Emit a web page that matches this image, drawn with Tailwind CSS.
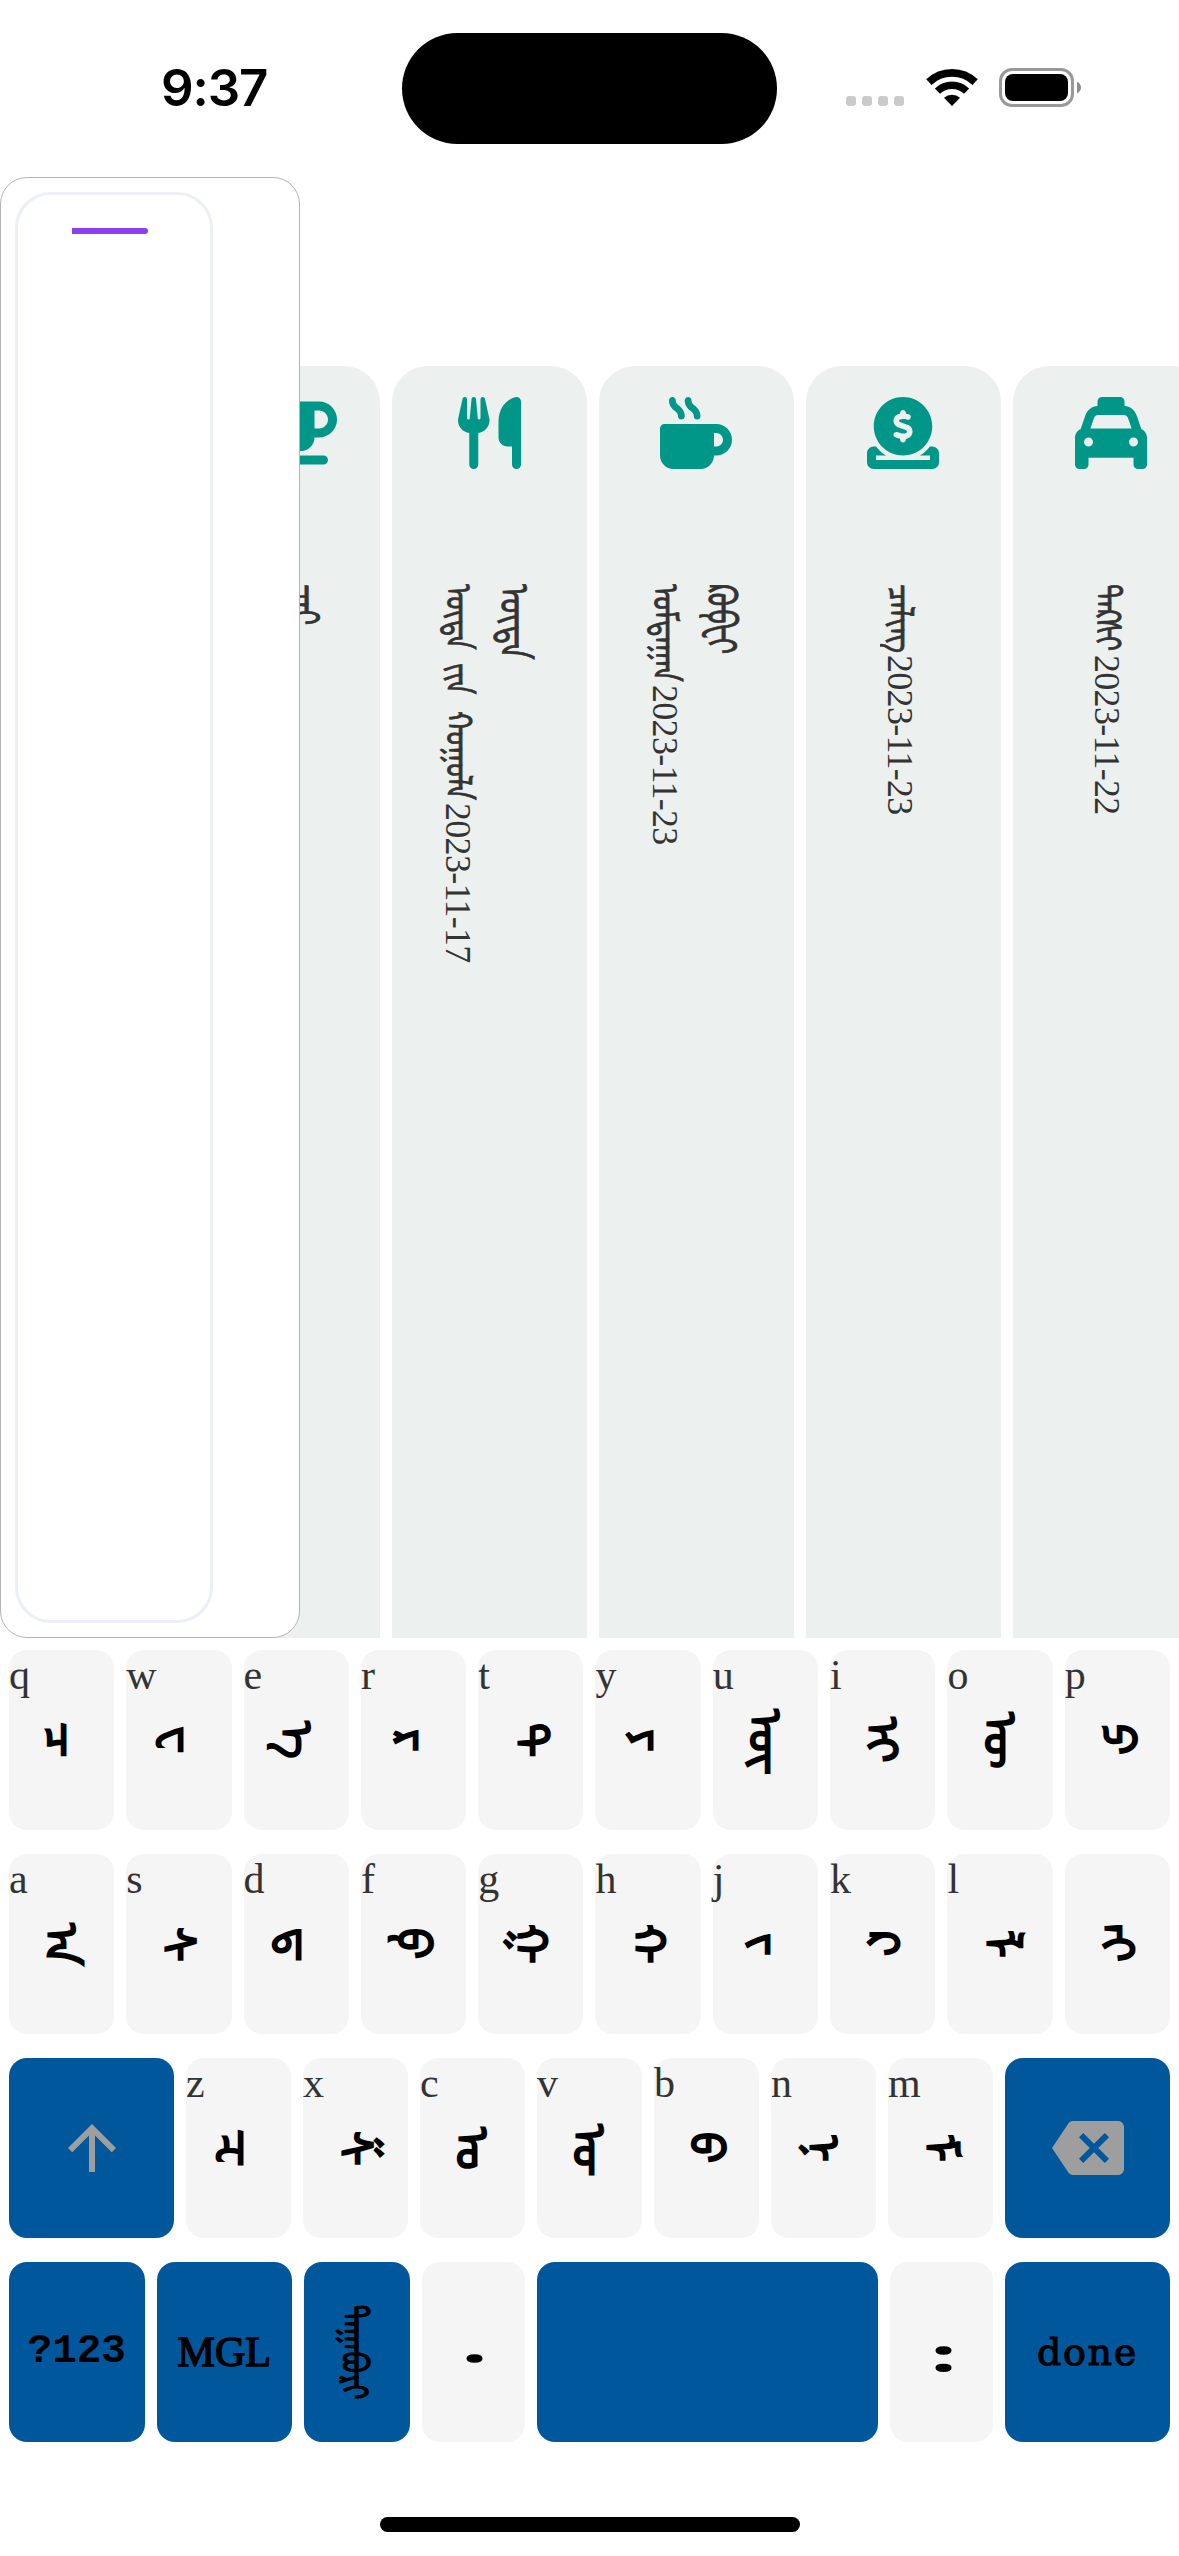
<!DOCTYPE html>
<html lang="mn">
<head>
<meta charset="utf-8">
<title>Keyboard</title>
<script src="https://cdn.jsdelivr.net/npm/@tailwindcss/browser@4"></script>
</head>
<body class="relative flex h-[2556px] w-[1179px] flex-col overflow-hidden bg-white font-['Liberation_Serif','Noto_Sans_Mongolian',serif]">

<!-- Status bar -->
<header class="flex h-[177px] shrink-0 items-start">
  <div class="w-[402px] pt-[57px] pl-[161px] font-['Inter',sans-serif] text-[51px] leading-[62px] font-semibold tracking-[-1.1px]">9:37</div>
  <div class="mt-[33px] h-[111px] w-[375px] rounded-full bg-black"></div>
  <div class="flex pt-[68px] pl-[69px]">
    <div class="flex gap-[6px] pt-[28px]">
      <i class="size-[10px] rounded-[3px] bg-[#cbcbcb]"></i><i class="size-[10px] rounded-[3px] bg-[#cbcbcb]"></i><i class="size-[10px] rounded-[3px] bg-[#cbcbcb]"></i><i class="size-[10px] rounded-[3px] bg-[#cbcbcb]"></i>
    </div>
    <svg class="ml-[21px] h-[40px] w-[54px]" viewBox="-27 -38.5 54 40" fill="none" stroke="#000">
      <path stroke-width="7.7" d="M-23.1-24.4A33.6 33.6 0 0 1 23.1-24.4"/>
      <path stroke-width="7.3" d="M-14.6-15.4A21.2 21.2 0 0 1 14.6-15.4"/>
      <path fill="#000" stroke="none" d="M0-.5L-8-8.7A12 12 0 0 1 8-8.7Z"/>
    </svg>
    <div class="ml-[20px] h-[39px] w-[75px] rounded-[13px] border-3 border-[#999] p-[3px]"><div class="h-[27px] rounded-[8px] bg-black"></div></div>
    <svg class="mt-[13px] ml-[3px] h-[13px] w-[4px]" viewBox="0 0 4 13"><path fill="#8c8c8c" d="M0 .5Q4 3 4 6.5T0 12.5Z"/></svg>
  </div>
</header>

<!-- Expense cards -->
<main class="flex h-[1461px] shrink-0 gap-[12px] overflow-hidden pt-[189px] pl-[185px]">
  <section class="flex w-[195px] shrink-0 flex-col items-center rounded-t-[36px] bg-[#ecf0ef] pt-[31px]">
    <div class="h-[72px] w-[72px]"><svg class="h-[72px] w-[90px] max-w-none fill-[#009688]" viewBox="0 0 640 512"><path d="M96 64c0-17.7 14.3-32 32-32H448h64c70.7 0 128 57.3 128 128s-57.3 128-128 128H480c0 53-43 96-96 96H192c-53 0-96-43-96-96V64zM480 224h32c35.3 0 64-28.7 64-64s-28.7-64-64-64H480V224zM32 416H544c17.7 0 32 14.3 32 32s-14.3 32-32 32H32c-17.7 0-32-14.3-32-32s14.3-32 32-32z"/></svg></div>
    <div class="mt-[115px] mr-[-42px] text-[41px] leading-[56px] text-[#333] whitespace-nowrap"><div class="h-[80px] origin-top-left scale-y-[0.68] [-webkit-text-stroke:0.8px_#333] [writing-mode:vertical-lr]">ᠴᠠᠢ</div></div>
  </section>
  <section class="flex w-[195px] shrink-0 flex-col items-center rounded-t-[36px] bg-[#ecf0ef] pt-[31px]">
    <svg class="h-[72px] w-[63px] fill-[#009688]" viewBox="0 0 448 512"><path d="M416 0C400 0 288 32 288 176V288c0 35.3 28.7 64 64 64h32V480c0 17.7 14.3 32 32 32s32-14.3 32-32V352 240 32c0-17.7-14.3-32-32-32zM64 16C64 7.8 57.9 1 49.7 .1S34.2 4.6 32.4 12.5L2.1 148.8C.7 155.1 0 161.5 0 167.9c0 45.9 35.1 83.6 80 87.7V480c0 17.7 14.3 32 32 32s32-14.3 32-32V255.6c44.9-4.1 80-41.8 80-87.7c0-6.4-.7-12.8-2.1-19.1L191.6 12.5c-1.8-8-9.3-13.3-17.4-12.4S160 7.8 160 16V150.2c0 5.4-4.4 9.8-9.8 9.8c-5.1 0-9.3-3.9-9.8-9L127.9 14.6C127.2 6.3 120.3 0 112 0s-15.2 6.3-15.9 14.6L83.7 151c-.5 5.1-4.7 9-9.8 9c-5.4 0-9.8-4.4-9.8-9.8V16z"/></svg>
    <div class="mt-[115px] mr-[7px] flex text-[36px] leading-[56px] text-[#333] whitespace-nowrap">
      <div class="flex w-[56px] flex-col">
        <span class="h-[79px] origin-top-left scale-y-[0.76] [-webkit-text-stroke:0.8px_#333] [writing-mode:vertical-lr]">ᠦᠳᠡ</span>
        <span class="h-[48px] origin-top-left scale-y-[0.72] [-webkit-text-stroke:0.8px_#333] [writing-mode:vertical-lr]">ᠵᠢᠨ</span>
        <span class="h-[92px] origin-top-left scale-y-[0.77] [-webkit-text-stroke:0.8px_#333] [writing-mode:vertical-lr]">ᠬᠣᠭᠣᠯᠠ</span>
        <span class="tracking-[-0.7px] [writing-mode:vertical-lr]">2023-11-17</span>
      </div>
      <div class="w-[56px] origin-top-left scale-y-[0.77] text-[41px] [-webkit-text-stroke:0.8px_#333] [writing-mode:vertical-lr]">ᠦᠳᠡ</div>
    </div>
  </section>
  <section class="flex w-[195px] shrink-0 flex-col items-center rounded-t-[36px] bg-[#ecf0ef] pt-[31px]">
    <svg class="mr-px size-[72px] fill-[#009688]" viewBox="0 0 512 512"><path d="M88 0C74.7 0 64 10.7 64 24c0 38.9 23.4 59.4 39.1 73.1l1.1 1C120.5 112.3 128 119.9 128 136c0 13.3 10.7 24 24 24s24-10.7 24-24c0-38.9-23.4-59.4-39.1-73.1l-1.1-1C119.5 47.7 112 40.1 112 24c0-13.3-10.7-24-24-24zM32 192c-17.7 0-32 14.3-32 32V416c0 53 43 96 96 96H288c53 0 96-43 96-96h16c61.9 0 112-50.1 112-112s-50.1-112-112-112H352 32zm352 64h16c26.5 0 48 21.5 48 48s-21.5 48-48 48H384V256zM224 24c0-13.3-10.7-24-24-24s-24 10.7-24 24c0 38.9 23.4 59.4 39.1 73.1l1.1 1C232.5 112.3 240 119.9 240 136c0 13.3 10.7 24 24 24s24-10.7 24-24c0-38.9-23.4-59.4-39.1-73.1l-1.1-1C231.5 47.7 224 40.1 224 24z"/></svg>
    <div class="mt-[115px] mr-[7px] flex text-[36px] leading-[56px] text-[#333] whitespace-nowrap">
      <div class="flex w-[56px] flex-col">
        <span class="h-[101px] origin-top-left scale-y-[0.77] [-webkit-text-stroke:0.8px_#333] [writing-mode:vertical-lr]">ᠤᠮᠳᠠᠭᠠᠨ</span>
        <span class="tracking-[-0.7px] [writing-mode:vertical-lr]">2023-11-23</span>
      </div>
      <div class="w-[56px] origin-top-left scale-y-[0.73] text-[41px] [-webkit-text-stroke:0.8px_#333] [writing-mode:vertical-lr]">ᠺᠣᠹᠧᠢ</div>
    </div>
  </section>
  <section class="flex w-[195px] shrink-0 flex-col items-center rounded-t-[36px] bg-[#ecf0ef] pt-[31px]">
    <svg class="mr-px size-[72px] fill-[#009688]" viewBox="0 0 512 512"><path d="M326.7 403.7c-22.1 8-45.9 12.3-70.7 12.3s-48.7-4.4-70.7-12.3c-.3-.1-.5-.2-.8-.3c-30-11-56.8-28.7-78.6-51.4C70 314.6 48 263.9 48 208C48 93.1 141.1 0 256 0S464 93.1 464 208c0 55.9-22 106.6-57.9 144c-1 1-2 2.1-3 3.1c-21.4 21.4-47.4 38.1-76.3 48.6zM256 91.9c-11.1 0-20.1 9-20.1 20.1v6c-5.6 1.2-10.9 2.9-15.9 5.1c-15 6.8-27.9 19.4-31.1 37.7c-1.8 10.2-.8 20 3.4 29c4.2 8.8 10.7 15 17.3 19.5c11.6 7.9 26.9 12.5 38.6 16l2.2 .7c13.9 4.2 23.4 7.4 29.3 11.7c2.5 1.8 3.4 3.2 3.7 4c.3 .8 .9 2.6 .2 6.7c-.6 3.5-2.5 6.4-8 8.8c-6.1 2.6-16 3.9-28.8 1.9c-6-1-16.7-4.6-26.2-7.9c-2.2-.7-4.3-1.5-6.4-2.1c-10.5-3.5-21.8 2.2-25.3 12.7s2.2 21.8 12.7 25.3c1.2 .4 2.7 .9 4.4 1.5c7.9 2.7 20.3 6.9 29.8 9.1V304c0 11.1 9 20.1 20.1 20.1s20.1-9 20.1-20.1v-5.5c5.3-1 10.5-2.5 15.4-4.6c15.7-6.7 28.4-19.7 31.6-38.7c1.8-10.4 1-20.3-3-29.4c-3.9-9-10.2-15.6-16.9-20.5c-12.2-8.8-28.3-13.7-40.4-17.4l-.8-.2c-14.2-4.3-23.8-7.3-29.9-11.4c-2.6-1.8-3.4-3-3.6-3.5c-.2-.3-.7-1.6-.1-5c.3-1.9 1.9-5.2 8.2-8.1c6.4-2.9 16.4-4.5 28.6-2.6c4.3 .7 17.9 3.3 21.7 4.3c10.7 2.8 21.6-3.5 24.5-14.2s-3.5-21.6-14.2-24.5c-4.4-1.2-14.4-3.2-21-4.4V112c0-11.1-9-20.1-20.1-20.1zM48 352H64c19.5 25.9 44 47.7 72.2 64H64v32H256 448V416H375.8c28.2-16.3 52.8-38.1 72.2-64h16c26.5 0 48 21.5 48 48v64c0 26.5-21.5 48-48 48H48c-26.5 0-48-21.5-48-48V400c0-26.5 21.5-48 48-48z"/></svg>
    <div class="mt-[115px] mr-[7px] flex w-[56px] flex-col text-[36px] leading-[56px] text-[#333] whitespace-nowrap">
      <span class="h-[71px] origin-top-left scale-y-[0.78] [-webkit-text-stroke:0.8px_#333] [writing-mode:vertical-lr]">ᠴᠠᠯᠢᠩ</span>
      <span class="tracking-[-0.7px] [writing-mode:vertical-lr]">2023-11-23</span>
    </div>
  </section>
  <section class="flex w-[195px] shrink-0 flex-col items-center rounded-t-[36px] bg-[#ecf0ef] pt-[31px]">
    <svg class="size-[72px] fill-[#009688]" viewBox="0 0 512 512"><path d="M192 0c-17.7 0-32 14.3-32 32V64c0 .1 0 .1 0 .2c-38.6 2.2-72.3 27.3-85.2 64.1L39.6 228.8C16.4 238.4 0 261.3 0 288V432v48c0 17.7 14.3 32 32 32H64c17.7 0 32-14.3 32-32V432H416v48c0 17.7 14.3 32 32 32h32c17.7 0 32-14.3 32-32V432 288c0-26.7-16.4-49.6-39.6-59.2L437.2 128.3c-12.9-36.8-46.6-62-85.2-64.1c0-.1 0-.1 0-.2V32c0-17.7-14.3-32-32-32H192zM165.4 128H346.6c13.6 0 25.7 8.6 30.2 21.4L402.9 224H109.1l26.1-74.6c4.5-12.8 16.6-21.4 30.2-21.4zM96 288a32 32 0 1 1 0 64 32 32 0 1 1 0-64zm288 32a32 32 0 1 1 64 0 32 32 0 1 1 -64 0z"/></svg>
    <div class="mt-[115px] mr-[7px] flex w-[56px] flex-col text-[36px] leading-[56px] text-[#333] whitespace-nowrap">
      <span class="h-[71px] origin-top-left scale-y-[0.77] [-webkit-text-stroke:0.8px_#333] [writing-mode:vertical-lr]">ᠲᠠᠺᠰᠢ</span>
      <span class="tracking-[-0.7px] [writing-mode:vertical-lr]">2023-11-22</span>
    </div>
  </section>
</main>

<!-- Input panel over the cards -->
<aside class="absolute top-[177px] left-0 h-[1461px] w-[300px] rounded-[27px] border border-[#b4b4b4] bg-white pt-[14px] pl-[14px]">
  <div class="h-[1431px] w-[198px] rounded-[36px] border-3 border-[#eceff7] pt-[33px] pl-[54px]">
    <div class="h-[6px] w-[76px] rounded-r-[3px] bg-[#8a3ff2]"></div>
  </div>
</aside>

<!-- Keyboard -->
<div id="keyboard" class="flex flex-col gap-[24px] px-[9px] pt-[12px]"></div>

<div class="absolute top-[2517px] left-[380px] h-[15px] w-[420px] rounded-full bg-black"></div>

<script>
  const letter = ([latin, glyph]) => `
    <div class="relative flex h-[180px] min-w-0 flex-1 items-center justify-center rounded-[18px] bg-[#f5f5f5]">
      <span class="absolute top-px left-0 text-[42px] leading-[48px] text-[#333]">${latin}</span>
      <span class="mr-[3px] text-[46px] leading-[60px] whitespace-nowrap text-black [-webkit-text-stroke:2px_#000] [writing-mode:vertical-lr]">${glyph}</span>
    </div>`;
  const blue = (size, inner) => `<div class="flex h-[180px] ${size} items-center justify-center rounded-[18px] bg-[#01579b] text-black">${inner}</div>`;
  const mark = (size, glyph) => `<div class="flex h-[180px] ${size} items-center justify-center rounded-[18px] bg-[#f5f5f5]"><span class="-translate-x-[7px] -translate-y-[2px] scale-x-[1.75] text-[68px] leading-[70px] [writing-mode:vertical-lr]">${glyph}</span></div>`;
  const row = (inner) => `<div class="flex gap-[12px]">${inner}</div>`;
  // Zero-width joiner and variation selector pick the initial, medial or final form of a letter.
  const z = '\u200d', v1 = '\u180b';
  const r1 = [['q','ᠴ'],['w','ᠸ'],['e','ᠡ'],['r','ᠷ'],['t','ᠲ'],['y','ᠶ'],['u','ᠦ'+z],['i','ᠢ'],['o','ᠥ'],['p','ᠫ']];
  const r2 = [['a','ᠠ'],['s','ᠰ'],['d',z+'ᠳ'+v1+z],['f','ᠹ'],['g','ᠭ'],['h','ᠬ'],['j','ᠵ'],['k','ᠺ'],['l','ᠯ'],['',z+'ᠡᠢ']];
  const r3 = [['z','ᠽ'],['x','ᠱ'],['c','ᠣ'],['v','ᠤ'+z],['b','ᠪ'],['n','ᠨ'],['m','ᠮ']];
  document.getElementById('keyboard').innerHTML =
    row(r1.map(letter).join('')) +
    row(r2.map(letter).join('')) +
    row(
      blue('w-[165px]', '<svg class="size-[72px] fill-[#9e9e9e]" viewBox="0 0 24 24"><path d="M4 12l1.41 1.41L11 7.83V20h2V7.83l5.58 5.59L20 12l-8-8-8 8z"/></svg>') +
      r3.map(letter).join('') +
      blue('w-[165px]', '<svg class="size-[72px] fill-[#9e9e9e]" viewBox="0 0 24 24"><path d="M22 3H7c-.69 0-1.23.35-1.59.88L0 12l5.41 8.11c.36.53.9.89 1.59.89h15c1.1 0 2-.9 2-2V5c0-1.1-.9-2-2-2zm-3 12.59L17.59 17 14 13.41 10.41 17 9 15.59 12.59 12 9 8.41 10.41 7 14 10.59 17.59 7 19 8.41 15.41 12 19 15.59z"/></svg>')
    ) +
    row(
      blue('w-[135.5px]', `<span class="font-['Liberation_Mono',monospace] text-[41px] font-bold">?123</span>`) +
      blue('w-[135.5px]', '<span class="text-[42px] [-webkit-text-stroke:1.5px_#000]">MGL</span>') +
      blue('w-[106px]', '<span class="mr-[6px] scale-y-[0.74] text-[36px] whitespace-nowrap [-webkit-text-stroke:1.5px_#000] [writing-mode:vertical-lr]">ᠲᠠᠭᠠᠪᠤᠷᠢ</span>') +
      mark('w-[102.5px]', '᠂') +
      blue('flex-1', '') +
      mark('w-[103px]', '᠃') +
      blue('w-[165px]', `<span class="font-['DejaVu_Serif',serif] text-[38px] tracking-[1.7px] [-webkit-text-stroke:1.2px_#000]">done</span>`)
    );
</script>
</body>
</html>
